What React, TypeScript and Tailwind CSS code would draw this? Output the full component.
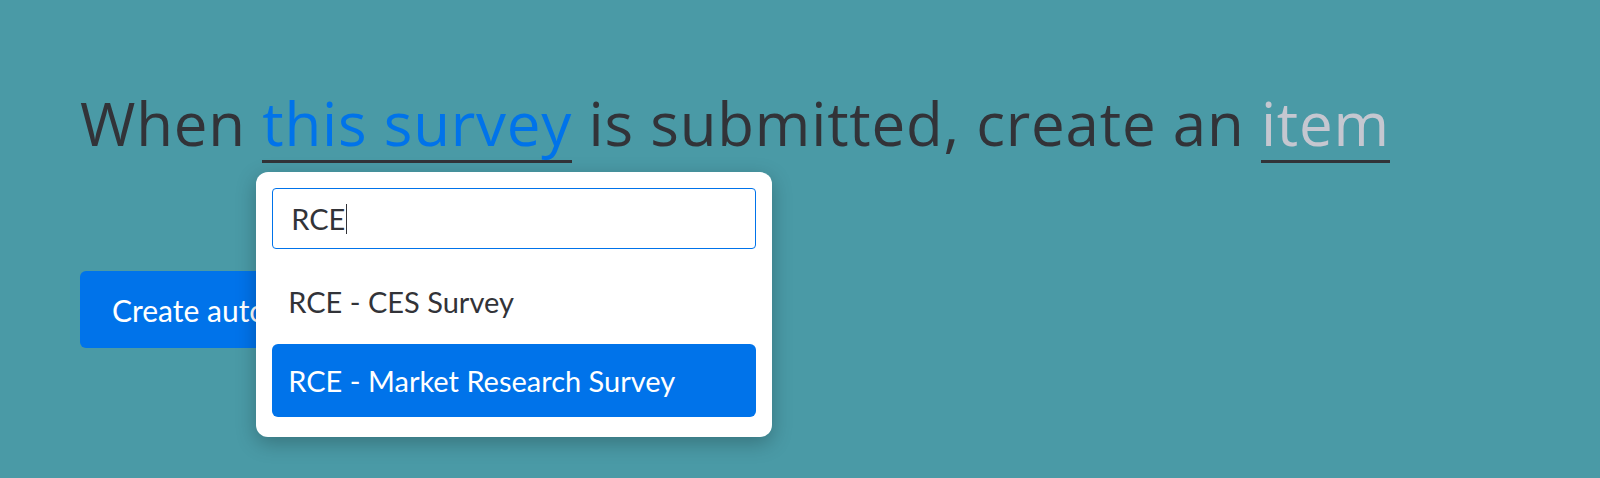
import React from "react";

const headingFont = { fontFamily: '"Open Sans", "Noto Sans", sans-serif' };
const bodyFont = { fontFamily: 'Lato, "Noto Sans", sans-serif' };

export default function App() {
  return (
    <div className="w-full h-[478px] bg-[#4a9aa6] overflow-hidden">
      <div className="pl-[80px] pt-[83px]">
        <h1
          className="text-[60px] leading-[80px] font-normal tracking-[0.8px] text-[#323338] whitespace-nowrap"
          style={headingFont}
        >
          <span>When </span>
          <span className="relative inline-block border-b-[3px] border-[#323338] leading-[74px]">
            <span className="text-[#0073ea]">this survey</span>
            <div
              className="absolute left-[-6px] top-[calc(100%+12px)] w-[516px] bg-white rounded-[12px] shadow-[0_6px_20px_rgba(0,0,0,0.25)] px-[16px] pt-[16px] pb-[20px] z-10 text-left tracking-normal"
              style={bodyFont}
            >
              <div className="h-[61px] border border-[#0073ea] rounded-[4px] flex items-center pl-[18px]">
                <span className="text-[29px] leading-none text-[#323338] font-normal">RCE</span>
                <span className="w-px h-[30px] bg-[#323338] ml-[1px]" />
              </div>
              <div className="mt-[16px] flex flex-col gap-[6px]">
                <div className="h-[73px] rounded-[6px] flex items-center pl-[16px] text-[29px] leading-none text-[#323338] font-normal">
                  RCE - CES Survey
                </div>
                <div className="h-[73px] rounded-[6px] flex items-center pl-[16px] text-[29px] leading-none text-white bg-[#0073ea] font-normal">
                  RCE - Market Research Survey
                </div>
              </div>
            </div>
          </span>
          <span> is submitted, create an </span>
          <span className="inline-block border-b-[3px] border-[#323338] leading-[74px] text-[#c5c7d0]">item</span>
        </h1>
        <button
          className="mt-[108px] h-[77px] px-[32px] rounded-[6px] bg-[#0073ea] text-white text-[30px] leading-none"
          style={bodyFont}
        >
          Create automation
        </button>
      </div>
    </div>
  );
}
